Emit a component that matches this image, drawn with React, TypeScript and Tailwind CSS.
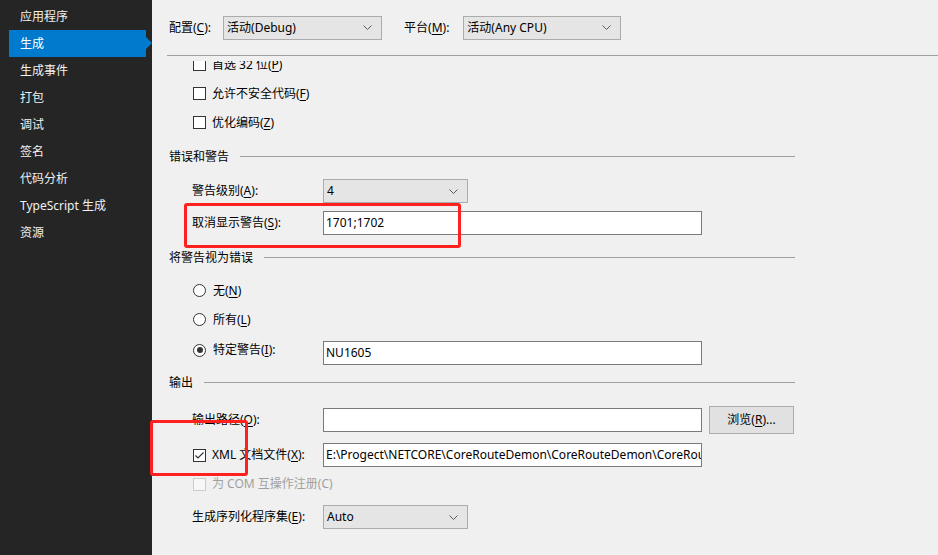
import clsx from "clsx";

const navItems = [
  "应用程序",
  "生成",
  "生成事件",
  "打包",
  "调试",
  "签名",
  "代码分析",
  "TypeScript 生成",
  "资源",
];

function U({ c }: { c: string }) {
  return <span className="underline underline-offset-[2px]">{c}</span>;
}

function Chevron() {
  return (
    <svg width="9" height="5" viewBox="0 0 9 5" className="shrink-0">
      <path d="M0.5 0.5 L4.5 4.5 L8.5 0.5" stroke="#5a5a5a" strokeWidth="1" fill="none" />
    </svg>
  );
}

function Select({ value, className }: { value: string; className: string }) {
  return (
    <div
      className={clsx(
        "flex h-[24px] items-center justify-between border border-[#acacac] bg-[#e5e5e5] pl-[3px] pr-[9px]",
        className
      )}
    >
      <span>{value}</span>
      <Chevron />
    </div>
  );
}

function Input({ value, className }: { value?: string; className: string }) {
  return (
    <div
      className={clsx(
        "flex h-[24px] items-center overflow-hidden whitespace-nowrap border border-[#7a7a7a] bg-white px-[2px]",
        className
      )}
    >
      {value}
    </div>
  );
}

function Check({ checked, disabled }: { checked?: boolean; disabled?: boolean }) {
  return (
    <span
      className={clsx(
        "flex h-[13px] w-[13px] shrink-0 items-center justify-center border",
        disabled ? "border-[#cccccc] bg-[#f7f7f7]" : "border-[#333333] bg-white"
      )}
    >
      {checked && (
        <svg width="11" height="11" viewBox="0 0 11 11">
          <path d="M1.5 5.5 L4 8 L9.5 2.5" stroke="#333333" strokeWidth="1.2" fill="none" />
        </svg>
      )}
    </span>
  );
}

function Radio({ checked }: { checked?: boolean }) {
  return (
    <span className="flex h-[13px] w-[13px] shrink-0 items-center justify-center rounded-full border border-[#333333] bg-white">
      {checked && <span className="h-[6px] w-[6px] rounded-full bg-[#333333]" />}
    </span>
  );
}

function Section({ title, className }: { title: string; className?: string }) {
  return (
    <div className={clsx("flex h-[19px] items-center pl-[17px]", className)}>
      <span>{title}</span>
      <span className="ml-[11px] h-px flex-1 bg-[#a0a0a0]" />
    </div>
  );
}

export default function App() {
  return (
    <div className="relative flex h-[555px] w-[938px] overflow-hidden font-['Noto_Sans','Noto_Sans_CJK_SC',sans-serif] text-[12px] leading-none">
      {/* Sidebar */}
      <nav className="w-[152px] shrink-0 bg-[#252526] pt-[3px] text-[#f1f1f1]">
        {navItems.map((item) => (
          <div
            key={item}
            className={clsx(
              "relative ml-[9px] mr-[6px] flex h-[27px] items-center pl-[11px]",
              item === "生成" && "bg-[#007acc] text-white"
            )}
          >
            {item}
            {item === "生成" && (
              <span className="absolute right-[-6px] top-[7px] h-0 w-0 border-y-[6px] border-l-[6px] border-y-transparent border-l-[#007acc]" />
            )}
          </div>
        ))}
      </nav>

      {/* Content */}
      <div className="flex flex-1 flex-col bg-[#f0f0f0] text-black">
        <header className="flex h-[55px] items-center pl-[17px]">
          <span>
            配置(<U c="C" />):
          </span>
          <Select value="活动(Debug)" className="ml-[12px] w-[159px]" />
          <span className="ml-[22px]">
            平台(<U c="M" />):
          </span>
          <Select value="活动(Any CPU)" className="ml-[14px] w-[158px]" />
        </header>
        <div className="ml-[15px] h-px bg-[#a0a0a0]" />

        <div className="mt-[5px] flex-1 overflow-hidden">
          <div className="-mt-[11px] w-[643px]">
            {/* checkbox rows */}
            {[
              ["首选 32 位(", "P", ")"],
              ["允许不安全代码(", "F", ")"],
              ["优化编码(", "Z", ")"],
            ].map(([a, b, c]) => (
              <div key={a} className="flex h-[29px] items-center gap-[6px] pl-[41px]">
                <Check />
                <span>
                  {a}
                  <U c={b} />
                  {c}
                </span>
              </div>
            ))}

            <Section title="错误和警告" className="mt-[10px]" />
            <div className="mt-[13px] flex h-[24px] items-center pl-[40px]">
              <span className="w-[131px]">
                警告级别(<U c="A" />):
              </span>
              <Select value="4" className="w-[145px]" />
            </div>
            <div className="mt-[8px] flex h-[24px] items-center pl-[40px]">
              <span className="w-[131px]">
                取消显示警告(<U c="S" />):
              </span>
              <Input value="1701;1702" className="w-[379px]" />
            </div>

            <Section title="将警告视为错误" className="mt-[13px]" />
            <div className="mt-[9px] flex h-[29px] items-center gap-[7px] pl-[41px]">
              <Radio />
              <span>
                无(<U c="N" />)
              </span>
            </div>
            <div className="flex h-[29px] items-center gap-[7px] pl-[41px]">
              <Radio />
              <span>
                所有(<U c="L" />)
              </span>
            </div>
            <div className="mt-[7px] flex h-[24px] items-center pl-[41px]">
              <div className="flex w-[130px] items-center gap-[7px] pb-[6px]">
                <Radio checked />
                <span>
                  特定警告(<U c="I" />):
                </span>
              </div>
              <Input value="NU1605" className="w-[379px]" />
            </div>

            <Section title="输出" className="mt-[8px]" />
            <div className="mt-[14px] flex h-[28px] items-center pl-[40px]">
              <span className="w-[131px]">
                输出路径(<U c="O" />):
              </span>
              <Input className="w-[379px]" />
              <div className="ml-[7px] flex h-[28px] w-[85px] items-center justify-center border border-[#adadad] bg-[#e1e1e1]">
                浏览(<U c="R" />)...
              </div>
            </div>
            <div className="mt-[9px] flex h-[24px] items-center pl-[41px]">
              <div className="flex w-[130px] items-center gap-[6px]">
                <Check checked />
                <span>
                  XML 文档文件(<U c="X" />):
                </span>
              </div>
              <Input
                value="E:\Progect\NETCORE\CoreRouteDemon\CoreRouteDemon\CoreRouteDemon.xml"
                className="w-[379px]"
              />
            </div>
            <div className="mt-[5px] flex h-[24px] items-center gap-[6px] pl-[41px] text-[#a0a0a0]">
              <Check disabled />
              <span>为 COM 互操作注册(C)</span>
            </div>
            <div className="mt-[9px] flex h-[24px] items-center pl-[40px]">
              <span className="w-[131px]">
                生成序列化程序集(<U c="E" />):
              </span>
              <Select value="Auto" className="w-[145px]" />
            </div>
          </div>
        </div>
      </div>

      {/* Annotation boxes */}
      <div className="absolute left-[184px] top-[203px] h-[45px] w-[277px] rounded-[3px] border-[3px] border-[#ff2020]" />
      <div className="absolute left-[150px] top-[420px] h-[56px] w-[98px] rounded-[3px] border-[3px] border-[#ff2020]" />
    </div>
  );
}
